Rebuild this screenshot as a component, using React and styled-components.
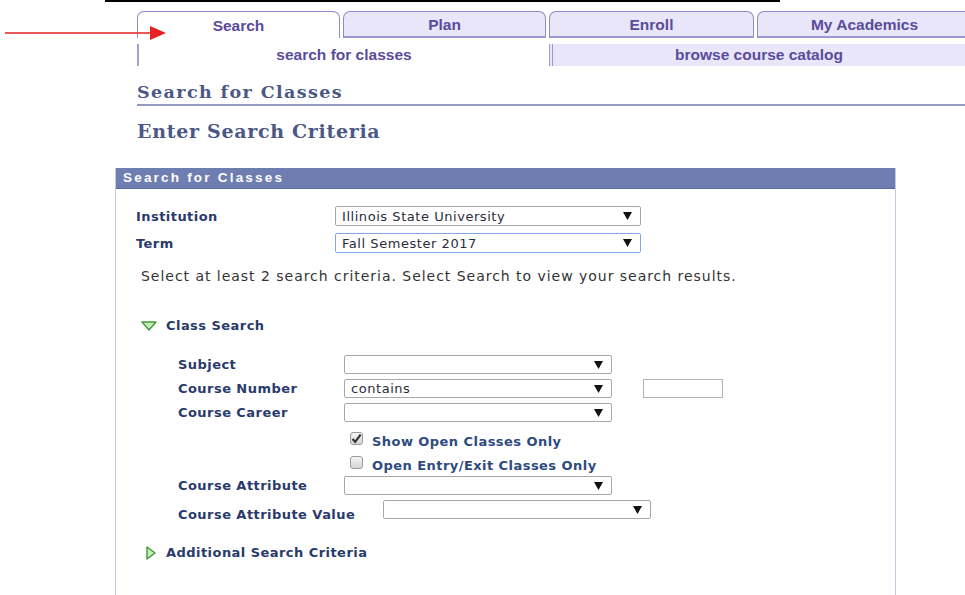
import React from "react";
import styled, { createGlobalStyle } from "styled-components";

const GlobalStyle = createGlobalStyle`
  html, body {
    margin: 0;
    padding: 0;
    background: #ffffff;
    overflow: hidden;
  }
  body {
    font-family: "DejaVu Sans", Verdana, sans-serif;
  }
`;

const Page = styled.div`
  position: relative;
  width: 965px;
  height: 595px;
  overflow: hidden;
`;

const TopRule = styled.div`
  margin-left: 105px;
  width: 675px;
  border-top: 2px solid #000;
`;

const Arrow = styled.svg`
  position: absolute;
  left: 0;
  top: 20px;
`;

const TabRow = styled.div`
  display: flex;
  gap: 3px;
  margin-top: 9px;
  padding-left: 137px;
`;

const Tab = styled.div`
  flex: 0 0 ${(p) => p.width || "203px"};
  height: 27px;
  box-sizing: border-box;
  border: 1px solid #8c8ad0;
  border-bottom: ${(p) => (p.active ? "none" : "2px solid #9a98d4")};
  border-radius: 7px 7px 0 0;
  background: ${(p) => (p.active ? "#ffffff" : "#e8e6f8")};
  color: #5a4b9c;
  font: bold 15.5px "Liberation Sans", Arial, sans-serif;
  display: flex;
  align-items: center;
  justify-content: center;
  padding-top: 1px;
`;

const SubRow = styled.div`
  display: flex;
  margin: 6px 0 0 137px;
  height: 22px;
`;

const SubTab = styled.div`
  flex: ${(p) => (p.active ? "0 0 412px" : "1")};
  box-sizing: border-box;
  border-left: ${(p) => (p.active ? "2px solid #a09ed6" : "4px double #9a98d4")};
  background: ${(p) => (p.active ? "#ffffff" : "#e8e6f8")};
  color: #5a4b9c;
  font: bold 15.5px "Liberation Sans", Arial, sans-serif;
  display: flex;
  align-items: center;
  justify-content: center;
`;

const PageTitle = styled.h1`
  margin: 15px 0 0 137px;
  padding-bottom: 1px;
  border-bottom: 2px solid #9199c2;
  font: bold 17.5px "DejaVu Serif", Georgia, serif;
  color: #4b5886;
  letter-spacing: 1.4px;
  line-height: 22px;
`;

const SectionTitle = styled.h2`
  margin: 13px 0 0 137px;
  font: bold 19px "DejaVu Serif", Georgia, serif;
  color: #4b5886;
  letter-spacing: 0.7px;
  line-height: 24px;
`;

const Panel = styled.div`
  margin: 25px 0 0 115px;
  width: 781px;
  height: 440px;
  box-sizing: border-box;
  border: 1px solid #c6cce0;
  border-top: none;
`;

const PanelHeader = styled.div`
  height: 20px;
  background: #6f7eb0;
  border-bottom: 1px solid #5b6a9c;
  color: #ffffff;
  font: bold 13.5px "Liberation Sans", Arial, sans-serif;
  letter-spacing: 2.2px;
  line-height: 20px;
  padding-left: 7px;
`;

const TopFields = styled.div`
  display: grid;
  grid-template-columns: 199px 306px;
  row-gap: 7px;
  align-items: center;
  padding: 17px 0 0 20px;
`;

const Label = styled.div`
  font: bold 13px "DejaVu Sans", Verdana, sans-serif;
  letter-spacing: 0.45px;
  color: #2a3a6c;
  width: ${(p) => p.width || "auto"};
  flex-shrink: 0;
  padding-top: ${(p) => p.drop || 0};
`;

const Select = styled.div`
  width: ${(p) => p.width || "306px"};
  height: ${(p) => p.height || "20px"};
  box-sizing: border-box;
  border: 1px solid ${(p) => (p.focused ? "#7ea9e6" : "#a8a8a8")};
  border-radius: 2px;
  background: #ffffff;
  display: flex;
  align-items: center;
  justify-content: space-between;
  padding: 0 8px 0 6px;
  font: 13px "DejaVu Sans", Verdana, sans-serif;
  letter-spacing: 0.55px;
  color: #2c2c3c;
`;

const TextBox = styled.div`
  width: 80px;
  height: 19px;
  box-sizing: border-box;
  border: 1px solid #b4b4b4;
  background: #ffffff;
  margin-left: 31px;
`;

const Note = styled.p`
  margin: 15px 0 0 25px;
  font: 14px "DejaVu Sans", Verdana, sans-serif;
  color: #333333;
  letter-spacing: 0.97px;
`;

const Toggle = styled.div`
  display: flex;
  align-items: center;
  gap: ${(p) => p.gap || "9px"};
  margin: ${(p) => p.margin};
  padding-left: ${(p) => p.indent || "25px"};
  font: bold 13px "DejaVu Sans", Verdana, sans-serif;
  letter-spacing: 0.45px;
  color: #2a3a6c;
`;

const Criteria = styled.div`
  display: flex;
  flex-direction: column;
  gap: ${(p) => p.gap || "5px"};
  margin: ${(p) => p.top || "0"} 0 0 62px;
`;

const FieldRow = styled.div`
  display: flex;
  align-items: ${(p) => p.align || "center"};
`;

const CheckRow = styled.div`
  display: flex;
  align-items: center;
  gap: 9px;
  margin-left: 234px;
  margin-top: ${(p) => p.top || 0};
  font: bold 13px "DejaVu Sans", Verdana, sans-serif;
  letter-spacing: 0.45px;
  color: #2e4a80;
`;

const Box = styled.div`
  width: 13px;
  height: 13px;
  box-sizing: border-box;
  border: 1px solid #9a9a9a;
  border-radius: 3px;
  background: linear-gradient(#f4f4f4, #d6d6d6);
  display: flex;
  align-items: center;
  justify-content: center;
  margin-top: -6px;
`;

const Caret = () => (
  <svg width="9" height="8" viewBox="0 0 9 8">
    <polygon points="0,0 9,0 4.5,8" fill="#111" />
  </svg>
);

const Dropdown = ({ value, width, height, focused }) => (
  <Select width={width} height={height} focused={focused}>
    <span>{value}</span>
    <Caret />
  </Select>
);

const Checkbox = ({ checked }) => (
  <Box>
    {checked && (
      <svg width="11" height="11" viewBox="0 0 11 11">
        <path d="M1.5 6 L4.2 8.8 L9.6 1.6" stroke="#333" strokeWidth="2.2" fill="none" />
      </svg>
    )}
  </Box>
);

export default function App() {
  return (
    <Page>
      <GlobalStyle />
      <TopRule />
      <Arrow width="170" height="28" viewBox="0 0 170 28">
        <line x1="5" y1="13" x2="152" y2="13" stroke="#e32222" strokeWidth="1.5" />
        <polygon points="150,6 166,13 150,20" fill="#e82020" />
      </Arrow>

      <TabRow>
        <Tab active>Search</Tab>
        <Tab>Plan</Tab>
        <Tab width="205px">Enroll</Tab>
        <Tab width="215px">My Academics</Tab>
      </TabRow>
      <SubRow>
        <SubTab active>search for classes</SubTab>
        <SubTab>browse course catalog</SubTab>
      </SubRow>

      <PageTitle>Search for Classes</PageTitle>
      <SectionTitle>Enter Search Criteria</SectionTitle>

      <Panel>
        <PanelHeader>Search for Classes</PanelHeader>
        <TopFields>
          <Label>Institution</Label>
          <Dropdown value="Illinois State University" />
          <Label>Term</Label>
          <Dropdown value="Fall Semester 2017" focused />
        </TopFields>
        <Note>
          Select at least 2 search criteria. Select Search to view your search results.
        </Note>

        <Toggle margin="34px 0 0 0">
          <svg width="16" height="10" viewBox="0 0 16 10">
            <polygon points="1,1 15,1 8,9" fill="#c6ecb8" stroke="#3f9a3a" strokeWidth="1.4" strokeLinejoin="round" />
          </svg>
          Class Search
        </Toggle>

        <Criteria top="22px">
          <FieldRow>
            <Label width="166px">Subject</Label>
            <Dropdown width="268px" height="19px" />
          </FieldRow>
          <FieldRow>
            <Label width="166px">Course Number</Label>
            <Dropdown width="268px" height="19px" value="contains" />
            <TextBox />
          </FieldRow>
          <FieldRow>
            <Label width="166px">Course Career</Label>
            <Dropdown width="268px" height="19px" />
          </FieldRow>
        </Criteria>
        <CheckRow top="12px">
          <Checkbox checked />
          Show Open Classes Only
        </CheckRow>
        <CheckRow top="9px">
          <Checkbox />
          Open Entry/Exit Classes Only
        </CheckRow>
        <Criteria top="3px">
          <FieldRow>
            <Label width="166px">Course Attribute</Label>
            <Dropdown width="268px" height="19px" />
          </FieldRow>
          <FieldRow align="flex-start">
            <Label width="205px" drop="7px">Course Attribute Value</Label>
            <Dropdown width="268px" height="19px" />
          </FieldRow>
        </Criteria>

        <Toggle margin="23px 0 0 0" indent="30px" gap="10px">
          <svg width="10" height="14" viewBox="0 0 10 14">
            <polygon points="1,1 9,7 1,13" fill="#c6ecb8" stroke="#3f9a3a" strokeWidth="1.4" strokeLinejoin="round" />
          </svg>
          Additional Search Criteria
        </Toggle>
      </Panel>
    </Page>
  );
}
